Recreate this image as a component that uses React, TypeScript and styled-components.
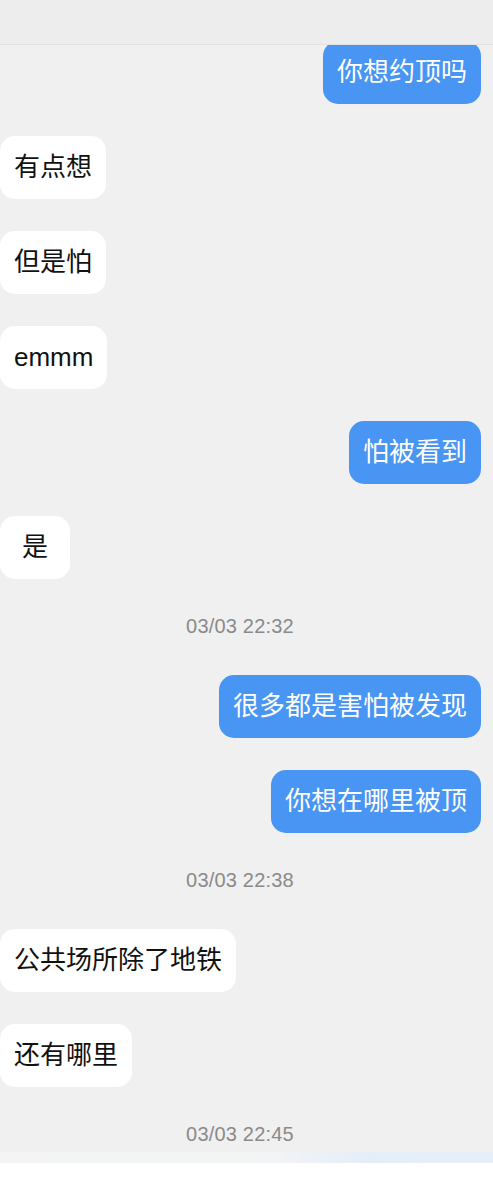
import styled, { createGlobalStyle } from 'styled-components'

const GlobalStyle = createGlobalStyle`
  html, body {
    margin: 0;
    padding: 0;
    background: #f0f0f0;
  }
  body {
    font-family: "Liberation Sans", "Noto Sans CJK SC", sans-serif;
  }
`

const Screen = styled.div`
  height: 1199px;
  display: flex;
  flex-direction: column;
  overflow: hidden;
  background: #f0f0f0;
`

const TopBar = styled.header`
  position: relative;
  z-index: 2;
  flex: 0 0 45px;
  background: #ededed;
  border-bottom: 1px solid #e2e2e2;
  box-sizing: border-box;
`

const MessageList = styled.main`
  position: relative;
  z-index: 1;
  margin-top: -4px;
  display: flex;
  flex-direction: column;
  gap: 32px;
`

const Row = styled.div<{ $mine?: boolean }>`
  display: flex;
  justify-content: ${p => (p.$mine ? 'flex-end' : 'flex-start')};
  padding-right: ${p => (p.$mine ? '12px' : '0')};
`

const Bubble = styled.div<{ $mine?: boolean }>`
  box-sizing: border-box;
  height: 63px;
  min-width: 70px;
  padding: 0 14px;
  display: flex;
  align-items: center;
  justify-content: center;
  border-radius: 15px;
  font-size: 26px;
  line-height: 35px;
  white-space: nowrap;
  background: ${p => (p.$mine ? '#4895f3' : '#ffffff')};
  color: ${p => (p.$mine ? '#ffffff' : '#111111')};
`

const Stamp = styled.div`
  height: 32px;
  line-height: 31px;
  padding-right: 13px;
  text-align: center;
  font-size: 20px;
  letter-spacing: 0.2px;
  color: #8a8a8a;
`

const BottomBar = styled.footer`
  margin-top: auto;
  flex: 0 0 47px;
  display: flex;
  flex-direction: column;
  background: #ffffff;
`

const BarEdge = styled.div`
  height: 11px;
  background: linear-gradient(90deg, #f4f4f4 0%, #f3f4f5 55%, #e4eef9 75%, #e6eff9 100%);
`

type Item =
  | { kind: 'msg'; text: string; mine?: boolean }
  | { kind: 'time'; text: string }

const items: Item[] = [
  { kind: 'msg', text: '你想约顶吗', mine: true },
  { kind: 'msg', text: '有点想' },
  { kind: 'msg', text: '但是怕' },
  { kind: 'msg', text: 'emmm' },
  { kind: 'msg', text: '怕被看到', mine: true },
  { kind: 'msg', text: '是' },
  { kind: 'time', text: '03/03 22:32' },
  { kind: 'msg', text: '很多都是害怕被发现', mine: true },
  { kind: 'msg', text: '你想在哪里被顶', mine: true },
  { kind: 'time', text: '03/03 22:38' },
  { kind: 'msg', text: '公共场所除了地铁' },
  { kind: 'msg', text: '还有哪里' },
  { kind: 'time', text: '03/03 22:45' },
]

const App = () => {
  return (
    <>
      <GlobalStyle />
      <Screen>
        <TopBar />
        <MessageList>
          {items.map((it, i) =>
            it.kind === 'time' ? (
              <Stamp key={i}>{it.text}</Stamp>
            ) : (
              <Row key={i} $mine={it.mine}>
                <Bubble $mine={it.mine}>{it.text}</Bubble>
              </Row>
            )
          )}
        </MessageList>
        <BottomBar>
          <BarEdge />
        </BottomBar>
      </Screen>
    </>
  )
}

export default App
